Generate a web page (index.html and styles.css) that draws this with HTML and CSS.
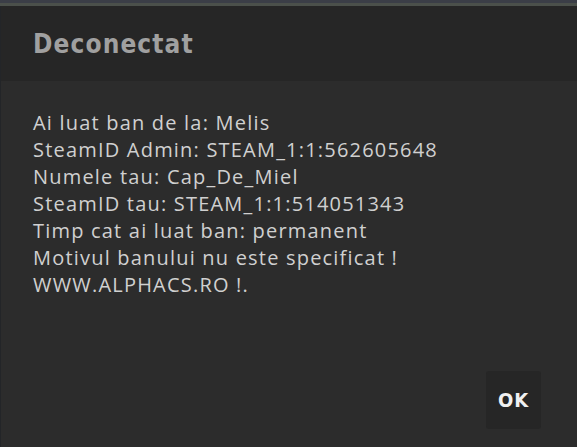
FILE: index.html
```html
<!DOCTYPE html>
<html lang="ro">

<head>
    <meta charset="UTF-8">
    <meta name="viewport" content="width=device-width, initial-scale=1.0">
    <title>Deconectat</title>
    <link rel="stylesheet" href="styles.css">
</head>

<body>
    <div class="topbar"></div>
    <div class="dialog">
        <!-- titlu -->
        <div class="head">
            <h1 class="title">Deconectat</h1>
        </div>
        <!-- mesaj ban -->
        <div class="content">
            <p class="msg">Ai luat ban de la: Melis<br>
                SteamID Admin: STEAM_1:1:562605648<br>
                Numele tau: Cap_De_Miel<br>
                SteamID tau: STEAM_1:1:514051343<br>
                Timp cat ai luat ban: permanent<br>
                Motivul banului nu este specificat !<br>
                WWW.ALPHACS.RO !.</p>
            <div class="actions">
                <button class="btn">OK</button>
            </div>
        </div>
    </div>
</body>

</html>
```

FILE: styles.css
```css
* {
    padding: 0;
    margin: 0;
    box-sizing: border-box;
}

body {
    width: 577px;
    height: 447px;
    overflow: hidden;
    background-color: #2c2c2c;
    font-family: "Open Sans", "Noto Sans", sans-serif;
}

.topbar {
    height: 6px;
    background: linear-gradient(to bottom, #3b3e47 0, #3b3e47 3px, #4b504b 3px, #4b504b 6px);
}

.dialog {
    height: 441px;
    display: flex;
    flex-direction: column;
    border-left: 1px solid #232528;
}

.head {
    height: 75px;
    background-color: #262626;
    padding: 22px 0 0 32px;
}

.title {
    font-family: "DejaVu Sans Condensed", "DejaVu Sans", sans-serif;
    font-weight: bold;
    font-size: 26px;
    letter-spacing: 1.1px;
    color: #a0a0a0;
    line-height: 32px;
}

.content {
    flex: 1;
    display: flex;
    flex-direction: column;
    padding: 28px 36px 18px 32px;
}

.msg {
    font-size: 20px;
    line-height: 27px;
    letter-spacing: 1.2px;
    color: #d0d0d0;
}

.actions {
    margin-top: auto;
    display: flex;
    justify-content: flex-end;
}

.btn {
    width: 55px;
    height: 58px;
    background-color: #262626;
    border: none;
    border-radius: 3px;
    color: #f0f0f0;
    font-family: "Liberation Sans Narrow", "DejaVu Sans Condensed", sans-serif;
    font-weight: bold;
    font-size: 20px;
    letter-spacing: 1px;
}
```
